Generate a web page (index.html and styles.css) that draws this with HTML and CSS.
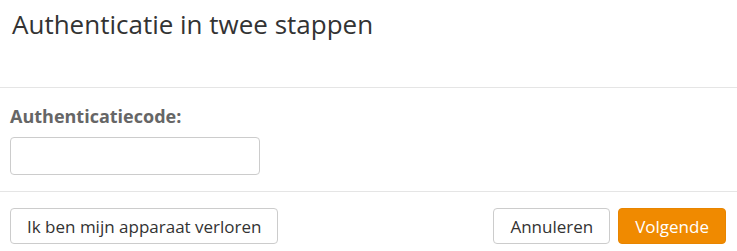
FILE: index.html
```html
<!DOCTYPE html>
<html lang="nl">
<head>
  <meta charset="UTF-8" />
  <title>Authenticatie in twee stappen</title>
  <link rel="stylesheet" href="styles.css">
</head>
<body>
  <div class="modal">
    <div class="modal-header">
      <h1>Authenticatie in twee stappen</h1>
    </div>
    <div class="modal-body">
      <label for="code">Authenticatiecode:</label>
      <input type="text" id="code" />
    </div>
    <div class="modal-footer">
      <button class="btn">Ik ben mijn apparaat verloren</button>
      <div class="actions">
        <button class="btn">Annuleren</button>
        <button class="btn primary">Volgende</button>
      </div>
    </div>
  </div>
</body>
</html>
```

FILE: styles.css
```css
body {
  margin: 0;
  font-family: "Open Sans", sans-serif;
  background: #fff;
  color: #333;
}

.modal {
  width: 737px;
}

.modal-header {
  height: 87px;
  padding: 0 12px;
  border-bottom: 1px solid #e5e5e5;
}

.modal-header h1 {
  margin: 0;
  padding-top: 6px;
  font-size: 26px;
  font-weight: 400;
  line-height: 36px;
  color: #333;
}

.modal-body {
  height: 103px;
  padding: 0 10px;
  border-bottom: 1px solid #e5e5e5;
  display: flex;
  flex-direction: column;
  align-items: flex-start;
}

.modal-body label {
  margin-top: 16px;
  font-size: 18px;
  font-weight: 700;
  color: #666;
  line-height: 24px;
}

.modal-body input {
  box-sizing: border-box;
  margin-top: 9px;
  width: 250px;
  height: 38px;
  border: 1px solid #ccc;
  border-radius: 4px;
}

.modal-footer {
  display: flex;
  justify-content: space-between;
  padding: 16px 11px 0 10px;
}

.actions {
  display: flex;
  gap: 8px;
}

.btn {
  box-sizing: border-box;
  height: 36px;
  padding: 0 16px;
  font-family: "Open Sans", sans-serif;
  font-size: 17px;
  color: #333;
  background: #fff;
  border: 1px solid #ccc;
  border-radius: 4px;
}

.btn.primary {
  background: #f08a00;
  border-color: #e88500;
  color: #fff;
}
```
